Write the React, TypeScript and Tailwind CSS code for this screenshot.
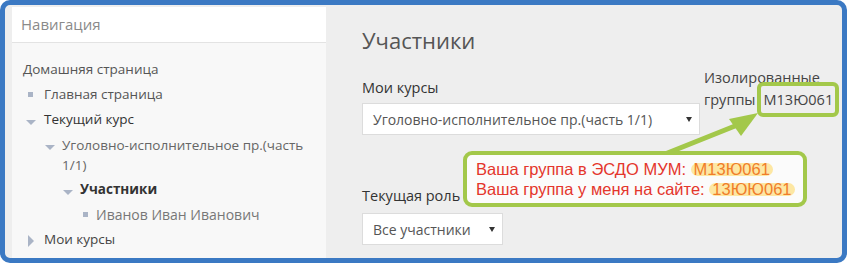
import React from 'react';

const DownTri = ({ className = '' }: { className?: string }) => (
  <span
    className={`inline-block w-0 h-0 border-l-[5px] border-r-[5px] border-t-[5px] border-l-transparent border-r-transparent border-t-[#aab4c6] ${className}`}
  />
);

const Caret = () => (
  <span className="inline-block w-0 h-0 border-l-[3px] border-r-[3px] border-t-[5px] border-l-transparent border-r-transparent border-t-[#333]" />
);

const App = () => {
  return (
    <div className="relative w-[849px] h-[264px] bg-white" style={{ fontFamily: '"Open Sans", "Noto Sans", sans-serif' }}>
      {/* Blue frame */}
      <div className="w-[847px] h-[263px] rounded-[10px] border-[5px] border-[#3b79c3] bg-[#eeeeee] overflow-hidden flex">
        {/* Sidebar */}
        <div className="ml-[7px] mt-[2px] w-[314px] flex flex-col">
          <div className="h-[36px] shrink-0 bg-white border-b border-[#e3e3e3] flex items-center pl-[9px] text-[15px] text-[#8a8a8a]">
            Навигация
          </div>
          <div className="flex-1 bg-[#f8f8f8] pt-[14px] text-[13.5px]">
            <div className="h-[25px] leading-[25px] pl-[11px] text-[#555]">Домашняя страница</div>
            <div className="h-[25px] flex items-center pl-[16px] text-[#555]">
              <span className="w-[5px] h-[5px] bg-[#aab4c6] mr-[11px]" />
              Главная страница
            </div>
            <div className="h-[25px] flex items-center pl-[14px] text-[#333]">
              <span className="w-[18px] flex items-center pt-[5px]">
                <DownTri />
              </span>
              Текущий курс
            </div>
            <div className="flex items-start pl-[33px] py-[2.5px] leading-[20px] text-[#666]">
              <span className="w-[17px] shrink-0 flex items-center h-[20px] pt-[5px]">
                <DownTri />
              </span>
              <span className="w-[250px]">Уголовно-исполнительное пр.(часть 1/1)</span>
            </div>
            <div className="h-[25px] flex items-center pl-[51px] text-[#333] font-bold">
              <span className="w-[17px] flex items-center pt-[5px]">
                <DownTri />
              </span>
              Участники
            </div>
            <div className="h-[25px] flex items-center pl-[71px] text-[#777] text-[14px]">
              <span className="w-[5px] h-[5px] bg-[#aab4c6] mr-[8px]" />
              Иванов Иван Иванович
            </div>
            <div className="h-[25px] flex items-center pl-[16px] text-[#444]">
              <span className="w-0 h-0 border-t-[6px] border-b-[6px] border-l-[6px] border-t-transparent border-b-transparent border-l-[#aab4c6] mr-[10px] mt-[2px]" />
              Мои курсы
            </div>
          </div>
        </div>

        {/* Main */}
        <div className="flex-1 pl-[36px] pt-[20px] text-[14.5px]">
          <h2 className="text-[22px] leading-[30px] text-[#555] font-normal">Участники</h2>
          <div className="flex items-start mt-[12px]">
            <div className="pt-[11px]">
              <div className="leading-[20px] text-[#333] mb-[5px]">Мои курсы</div>
              <div className="w-[338px] h-[32px] bg-white border border-[#dcdcdc] flex items-center justify-between pl-[10px] pr-[7px] text-[14px] text-[#555]">
                <span>Уголовно-исполнительное пр.(часть 1/1)</span>
                <Caret />
              </div>
            </div>
            <div className="ml-[4px] w-[134px] leading-[22px] text-[#444]">
              Изолированные
              <br />
              группы<span className="ml-[8px]">М13Ю061</span>
            </div>
          </div>
          <div className="mt-[51px] leading-[20px] text-[#333] mb-[7px]">Текущая роль</div>
          <div className="w-[141px] h-[32px] bg-white border border-[#dcdcdc] flex items-center justify-between pl-[10px] pr-[7px] text-[14px] text-[#555]">
            <span>Все участники</span>
            <Caret />
          </div>
        </div>
      </div>

      {/* Annotation: arrow */}
      <svg className="absolute left-0 top-0 pointer-events-none" width="849" height="264">
        <line x1="650" y1="160" x2="740" y2="124" stroke="#a3c84a" strokeWidth="5" />
        <polygon points="758,113 729,119 741,136" fill="#a3c84a" />
      </svg>

      {/* Annotation: group box */}
      <div className="absolute left-[757px] top-[82px] w-[82px] h-[35px] border-[4px] border-[#a3c84a] rounded-[6px]" />

      {/* Annotation: callout */}
      <div
        className="absolute left-[463px] top-[151px] w-[344px] h-[56px] border-[4px] border-[#a3c84a] rounded-[9px] bg-[#fbfbfb] pl-[9px] pt-[4px] text-[16.5px] leading-[20px] text-[#e4362c]"
        style={{ fontFamily: '"Liberation Sans", Arial, sans-serif' }}
      >
        <div>
          Ваша группа в ЭСДО МУМ:{' '}
          <span className="inline-block leading-[13px] rounded-full bg-[#fde7a3] px-[3px] text-[#f07d2a]">М13Ю061</span>
        </div>
        <div>
          Ваша группа у меня на сайте:{' '}
          <span className="inline-block leading-[13px] rounded-full bg-[#fde7a3] px-[3px] text-[#f07d2a]">13ЮЮ061</span>
        </div>
      </div>
    </div>
  );
};

export default App;
